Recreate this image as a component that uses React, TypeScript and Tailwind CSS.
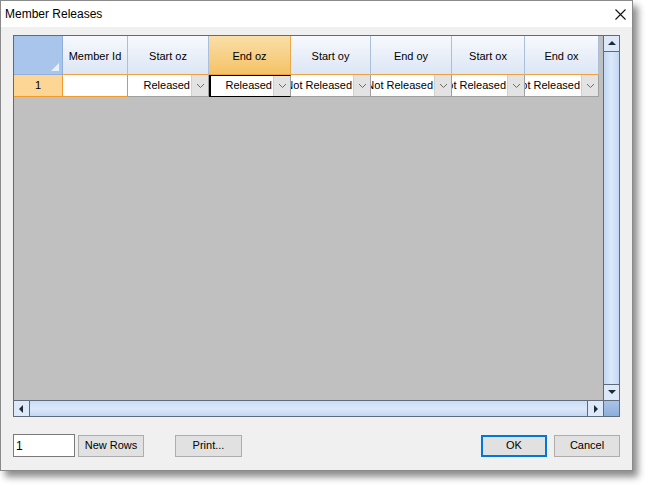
import React from 'react'

const font = { fontFamily: '"Liberation Sans", Arial, sans-serif' }

const cols = [
  { name: 'Member Id', w: 'w-[65px]', value: null },
  { name: 'Start oz', w: 'w-[81px]', value: 'Released' },
  { name: 'End oz', w: 'w-[82px]', value: 'Released', active: true },
  { name: 'Start oy', w: 'w-[80px]', value: 'Not Released' },
  { name: 'End oy', w: 'w-[81px]', value: 'Not Released' },
  { name: 'Start ox', w: 'w-[73px]', value: 'Not Released' },
  { name: 'End ox', w: 'w-[74px]', value: 'Not Released' },
]

function Chevron() {
  return (
    <svg width="9" height="6" viewBox="0 0 9 6">
      <path d="M1 1 L4.5 4.5 L8 1" fill="none" stroke="#6b6b6b" strokeWidth="1" />
    </svg>
  )
}

function Arrow({ dir }: { dir: 'up' | 'down' | 'left' | 'right' }) {
  const d = {
    up: 'M1 6 L5 2 L9 6 Z',
    down: 'M1 2 L5 6 L9 2 Z',
    left: 'M6 1 L2 5 L6 9 Z',
    right: 'M3 1 L7 5 L3 9 Z',
  }[dir]
  return (
    <svg width="10" height="10" viewBox="0 0 10 10">
      <path d={d} fill="#1e2a3a" />
    </svg>
  )
}

function Button({ label, className = '' }: { label: string; className?: string }) {
  return (
    <div className={`h-[22px] flex items-center justify-center bg-[#e1e1e1] border border-[#adadad] text-[11px] text-black ${className}`}>
      {label}
    </div>
  )
}

export default function App() {
  return (
    <div className="w-[650px] h-[486px] bg-white overflow-hidden" style={font}>
      <div className="w-[633px] h-[471px] flex flex-col bg-[#f0f0f0] border border-[#8a8a8a] shadow-[5px_6px_7px_rgba(0,0,0,0.45)]">
        {/* Title bar */}
        <div className="h-[26px] bg-white flex items-center justify-between pl-[4px] pr-[6px]">
          <span className="text-[12px] text-black">Member Releases</span>
          <svg width="11" height="11" viewBox="0 0 11 11">
            <path d="M0.5 0.5 L10.5 10.5 M10.5 0.5 L0.5 10.5" stroke="#111" strokeWidth="1.1" />
          </svg>
        </div>

        <div className="flex-1 flex flex-col pl-[12px] pt-[8px]">
          {/* Grid */}
          <div className="w-[607px] h-[382px] border border-[#5f6b7c] flex flex-col bg-[#c0c0c0]">
            <div className="flex flex-1 min-h-0">
              <div className="flex-1 flex flex-col">
                {/* header */}
                <div className="flex h-[39px]">
                  <div className="w-[49px] relative bg-[#a9c5ec] border-r border-b border-[#8fb0dc]">
                    <svg className="absolute right-[3px] bottom-[3px]" width="8" height="8" viewBox="0 0 8 8">
                      <path d="M8 0 L8 8 L0 8 Z" fill="#e8f0fb" />
                    </svg>
                  </div>
                  {cols.map(c => (
                    <div
                      key={c.name}
                      className={`${c.w} flex items-center justify-center pt-[2px] text-[11px] text-black border-r border-b ${
                        c.active
                          ? 'bg-gradient-to-b from-[#fadfa8] to-[#f4c264] border-r-[#e8a94a] border-b-[#f0a040]'
                          : 'bg-gradient-to-b from-[#f7f9fd] to-[#dce6f4] border-r-[#a9bfdc] border-b-[#f0a040]'
                      }`}
                    >
                      {c.name}
                    </div>
                  ))}
                </div>
                {/* row 1 */}
                <div className="flex h-[22px]">
                  <div className="w-[49px] flex items-center justify-center bg-[#fdd696] border-r border-b border-[#f29b2c] text-[11px]">
                    1
                  </div>
                  {cols.map(c =>
                    c.value === null ? (
                      <div key={c.name} className={`${c.w} bg-white border-r border-b border-r-[#a0a0a0] border-b-[#f29b2c]`} />
                    ) : (
                      <div
                        key={c.name}
                        className={`${c.w} flex bg-white border-b border-r border-[#a0a0a0] ${
                          c.active ? 'border-l-2 border-l-black border-t border-t-black border-b-black' : ''
                        }`}
                      >
                        <div className="flex-1 min-w-0 overflow-hidden flex justify-end items-center pr-[1px] pb-[1px]">
                          <span className="whitespace-nowrap text-[11px] text-black">{c.value}</span>
                        </div>
                        <div className="w-[17px] flex items-center justify-center bg-[#e3e3e3] border-l border-[#d0d0d0]">
                          <Chevron />
                        </div>
                      </div>
                    )
                  )}
                </div>
                <div className="flex-1" />
              </div>
              {/* vertical scrollbar */}
              <div className="w-[16px] flex flex-col border-l border-[#5f6b7c] bg-gradient-to-r from-[#c3d8f3] via-[#dbe8f9] to-[#c3d8f3]">
                <div className="h-[16px] flex items-center justify-center bg-[#dde9f8] border-b border-[#5f6b7c]">
                  <Arrow dir="up" />
                </div>
                <div className="flex-1" />
                <div className="h-[16px] flex items-center justify-center bg-[#dde9f8] border-t border-[#5f6b7c]">
                  <Arrow dir="down" />
                </div>
              </div>
            </div>
            {/* horizontal scrollbar */}
            <div className="h-[16px] flex border-t border-[#5f6b7c]">
              <div className="flex-1 flex bg-gradient-to-b from-[#c9dcf5] via-[#dbe8f9] to-[#c3d8f3]">
                <div className="w-[16px] flex items-center justify-center bg-[#dde9f8] border-r border-[#5f6b7c]">
                  <Arrow dir="left" />
                </div>
                <div className="flex-1" />
                <div className="w-[16px] flex items-center justify-center bg-[#dde9f8] border-l border-[#5f6b7c]">
                  <Arrow dir="right" />
                </div>
              </div>
              <div className="w-[16px] border-l border-[#5f6b7c] bg-gradient-to-b from-[#a9c3e6] to-[#8eaedb]" />
            </div>
          </div>

          {/* footer */}
          <div className="flex items-center mt-[17px] pr-[12px]">
            <div className="w-[62px] h-[23px] bg-white border border-[#7a7a7a] flex items-center pl-[2px] text-[12px]">1</div>
            <Button label="New Rows" className="w-[66px] ml-[3px]" />
            <Button label="Print..." className="w-[67px] ml-[31px]" />
            <div className="flex-1" />
            <Button label="OK" className="w-[66px] !border-2 !border-[#0078d7]" />
            <Button label="Cancel" className="w-[66px] ml-[7px]" />
          </div>
        </div>
      </div>
    </div>
  )
}
